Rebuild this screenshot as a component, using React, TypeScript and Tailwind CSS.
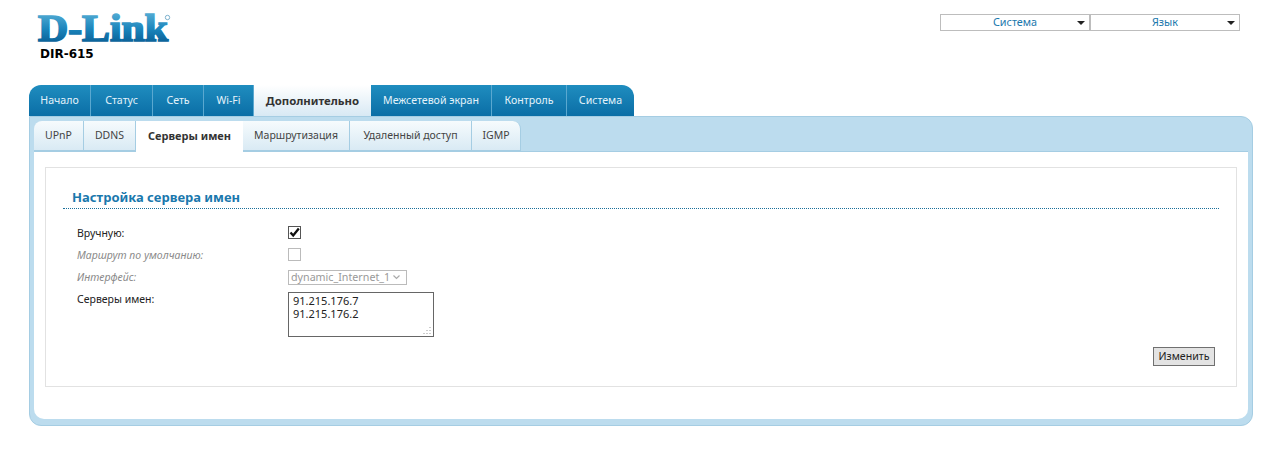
const mainTabs = [
  { label: "Начало", w: "w-[62px]" },
  { label: "Статус", w: "w-[62px]" },
  { label: "Сеть", w: "w-[51px]" },
  { label: "Wi-Fi", w: "w-[50px]" },
  { label: "Дополнительно", w: "w-[117px]", active: true },
  { label: "Межсетевой экран", w: "w-[121px]" },
  { label: "Контроль", w: "w-[75px]" },
  { label: "Система", w: "w-[67px]" },
];

const subTabs = [
  { label: "UPnP", w: "w-[50px]" },
  { label: "DDNS", w: "w-[52px]" },
  { label: "Серверы имен", w: "w-[107px]", active: true },
  { label: "Маршрутизация", w: "w-[107px]" },
  { label: "Удаленный доступ", w: "w-[122px]" },
  { label: "IGMP", w: "w-[49px]" },
];

const Logo = () => (
  <svg width="136" height="30" viewBox="0 0 136 30" className="block overflow-visible">
    <defs>
      <linearGradient id="logoFill" gradientUnits="userSpaceOnUse" x1="0" y1="0" x2="0" y2="28">
        <stop offset="0" stopColor="#4fa9d2" />
        <stop offset="0.55" stopColor="#1a84bb" />
        <stop offset="1" stopColor="#0b6299" />
      </linearGradient>
    </defs>
    <text
      x="0"
      y="26.5"
      fill="url(#logoFill)"
      stroke="url(#logoFill)"
      strokeWidth="1.7"
      fontFamily="'Liberation Serif', serif"
      fontWeight="700"
      fontSize="38"
      textLength="130"
      lengthAdjust="spacingAndGlyphs"
    >
      D-Link
    </text>
    <circle cx="129.5" cy="3.5" r="2.2" fill="none" stroke="#6fa9c8" strokeWidth="0.9" />
  </svg>
);

const HeaderSelect = ({ label }: { label: string }) => (
  <div className="relative flex h-[17px] w-[150px] items-center justify-center border border-[#bdbdbd] bg-white text-[10.8px] text-[#1a78ad]">
    {label}
    <span className="absolute right-[4px] top-[6px] h-0 w-0 border-x-[4px] border-t-[4px] border-x-transparent border-t-[#222]" />
  </div>
);

const FormRow = ({ label, muted, className, children }: { label: string; muted?: boolean; className: string; children: React.ReactNode }) => (
  <div className={`flex ${className}`}>
    <div className={`w-[211px] shrink-0 text-[10.5px] leading-[14px] ${muted ? "italic text-[#8a8a8a]" : "text-[#222]"}`}>
      {label}
    </div>
    {children}
  </div>
);

export default function App() {
  return (
    <div className="h-[474px] w-[1283px] overflow-hidden bg-white font-['Noto_Sans','Liberation_Sans',sans-serif]">
      {/* Header */}
      <header className="flex h-[85px] justify-between pl-[38px] pr-[43px] pt-[14px]">
        <div>
          <Logo />
          <div className="ml-[2px] mt-[3px] font-['DejaVu_Sans',sans-serif] text-[12px] font-bold leading-[15px] text-black">DIR-615</div>
        </div>
        <div className="flex">
          <HeaderSelect label="Система" />
          <HeaderSelect label="Язык" />
        </div>
      </header>

      <div className="ml-[29px] w-[1224px]">
        {/* Main tabs */}
        <nav className="flex h-[31px] w-[605px] overflow-hidden rounded-t-[12px]">
          {mainTabs.map((t) => (
            <div
              key={t.label}
              className={`flex items-center justify-center ${t.w} ${
                t.active
                  ? "bg-gradient-to-b from-white to-[#d8e9f4] text-[11.4px] font-bold text-[#333]"
                  : "border-r border-[#5aa8d0] bg-gradient-to-b from-[#1f8dbf] to-[#0a6ea6] text-[10.6px] text-[#e4f3fb] last:border-r-0"
              }`}
            >
              {t.label}
            </div>
          ))}
        </nav>

        {/* Panel */}
        <div className="h-[310px] rounded-b-[12px] rounded-tr-[12px] border border-[#a5cde3] bg-[#bcdcee] p-[4px]">
          <div className="flex h-[30px] w-[487px]">
            {subTabs.map((t, i) => (
              <div
                key={t.label}
                className={`flex items-center justify-center ${t.w} ${
                  t.active
                    ? "h-[31px] bg-white text-[11px] font-bold text-[#333]"
                    : "border-r border-b border-[#a5cde3] bg-gradient-to-b from-[#f6fbfd] to-[#d9eaf4] text-[10.5px] text-[#444]"
                } ${i === 0 ? "rounded-tl-[8px]" : ""} ${i === subTabs.length - 1 ? "rounded-tr-[8px]" : ""}`}
              >
                {t.label}
              </div>
            ))}
          </div>

          {/* Content */}
          <div className="h-[268px] rounded-b-[10px] border-t border-[#a5cde3] bg-white px-[11px] pt-[15px]">
            <div className="relative h-[220px] border border-[#e2e2e2] px-[17px]">
              <h2 className="border-b border-dotted border-[#1a6f9a] pb-[3px] pl-[9px] pt-[22px] text-[13px] font-bold leading-[15px] text-[#1a78ad]">
                Настройка сервера имен
              </h2>

              <div className="ml-[14px]">
                <FormRow label="Вручную:" className="mt-[17px] h-[22px] items-start">
                  <span className="flex h-[13px] w-[13px] items-center justify-center border border-[#555] bg-white">
                    <svg width="11" height="11" viewBox="0 0 11 11">
                      <path d="M1.5 5.5 L4.2 8.5 L9.8 1.5" fill="none" stroke="#111" strokeWidth="2.3" />
                    </svg>
                  </span>
                </FormRow>
                <FormRow label="Маршрут по умолчанию:" muted className="h-[22px] items-start">
                  <span className="h-[13px] w-[13px] border border-[#bbb] bg-white" />
                </FormRow>
                <FormRow label="Интерфейс:" muted className="h-[22px] items-start">
                  <div className="flex h-[15px] w-[119px] items-center justify-between border border-[#bbb] pl-[2px] pr-[6px] text-[10.7px] text-[#999]">
                    dynamic_Internet_1
                    <svg width="7" height="5" viewBox="0 0 7 5">
                      <path d="M0.5 0.5 L3.5 3.5 L6.5 0.5" fill="none" stroke="#aaa" strokeWidth="1.2" />
                    </svg>
                  </div>
                </FormRow>
                <FormRow label="Серверы имен:" className="items-start">
                  <div className="relative h-[45px] w-[146px] border border-[#666] px-[4px] pt-[1px] text-[11px] leading-[13px] text-[#222]">
                    91.215.176.7
                    <br />
                    91.215.176.2
                    <svg width="9" height="9" viewBox="0 0 9 9" className="absolute bottom-[1px] right-[1px]">
                      <path d="M7 1v1M7 4v1M4 4v1M7 7v1M4 7v1M1 7v1" stroke="#999" strokeWidth="1" />
                    </svg>
                  </div>
                </FormRow>
              </div>

              <button className="absolute bottom-[20px] right-[21px] h-[19px] w-[62px] border border-[#707070] bg-[#e3e3e3] text-[10.6px] text-[#222]">
                Изменить
              </button>
            </div>
          </div>
        </div>
      </div>
    </div>
  );
}
